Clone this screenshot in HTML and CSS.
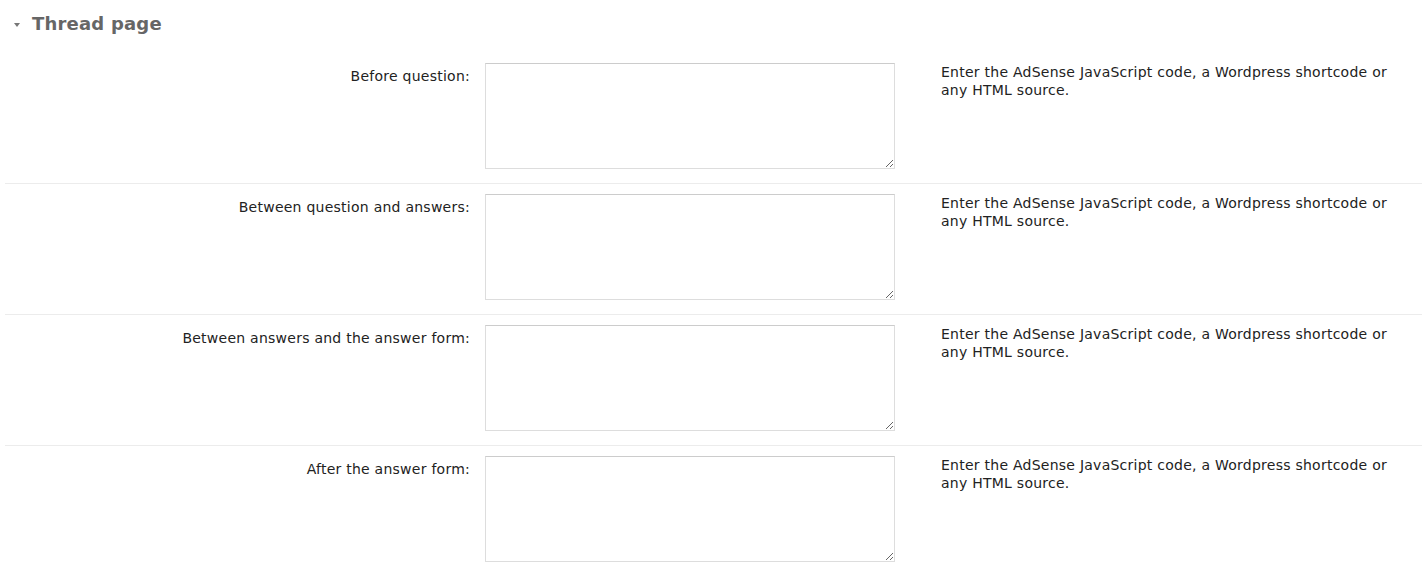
FILE: index.html
```html
<!DOCTYPE html>
<html lang="en">
<head>
<meta charset="utf-8">
<title>Thread page</title>
<link rel="stylesheet" href="styles.css">
</head>
<body>
<section class="settings">
  <h2 class="section-title"><span class="toggle"></span>Thread page</h2>
  <div class="rows">
    <div class="row">
      <label class="label" for="s1">Before question:</label>
      <textarea id="s1" class="field"></textarea>
      <p class="desc">Enter the AdSense JavaScript code, a Wordpress shortcode or any HTML source.</p>
    </div>
    <div class="row">
      <label class="label" for="s2">Between question and answers:</label>
      <textarea id="s2" class="field"></textarea>
      <p class="desc">Enter the AdSense JavaScript code, a Wordpress shortcode or any HTML source.</p>
    </div>
    <div class="row">
      <label class="label" for="s3">Between answers and the answer form:</label>
      <textarea id="s3" class="field"></textarea>
      <p class="desc">Enter the AdSense JavaScript code, a Wordpress shortcode or any HTML source.</p>
    </div>
    <div class="row">
      <label class="label" for="s4">After the answer form:</label>
      <textarea id="s4" class="field"></textarea>
      <p class="desc">Enter the AdSense JavaScript code, a Wordpress shortcode or any HTML source.</p>
    </div>
  </div>
</section>
</body>
</html>
```
FILE: styles.css
```css
html, body {
  margin: 0;
  padding: 0;
  background: #fff;
}
body {
  font-family: Verdana, "DejaVu Sans", sans-serif;
  font-size: 14px;
  letter-spacing: 0.25px;
  line-height: 18px;
  color: #222;
}
.section-title {
  display: flex;
  align-items: center;
  margin: 0;
  height: 53px;
  padding: 0 0 6px 14px;
  box-sizing: border-box;
  font-size: 18px;
  letter-spacing: 0.2px;
  font-weight: bold;
  color: #666;
}
.toggle {
  width: 0;
  height: 0;
  border-left: 3.5px solid transparent;
  border-right: 3.5px solid transparent;
  border-top: 4px solid #777;
  margin: 2px 12px 0 0;
}
.rows {
  margin-left: 5px;
}
.row {
  display: flex;
  align-items: flex-start;
  padding: 10px 0 14px;
  border-bottom: 1px solid #ececec;
}
.row:last-child {
  border-bottom: none;
}
.label {
  width: 465px;
  text-align: right;
  padding-top: 4px;
  flex: none;
}
.field {
  flex: none;
  width: 410px;
  height: 106px;
  margin: 0 0 0 15px;
  box-sizing: border-box;
  border: 1px solid #ddd;
  border-top-color: #ccc;
  border-radius: 0;
  padding: 2px;
  font: inherit;
  background: #fff;
}
.desc {
  margin: 0 0 0 46px;
  width: 462px;
}
```
